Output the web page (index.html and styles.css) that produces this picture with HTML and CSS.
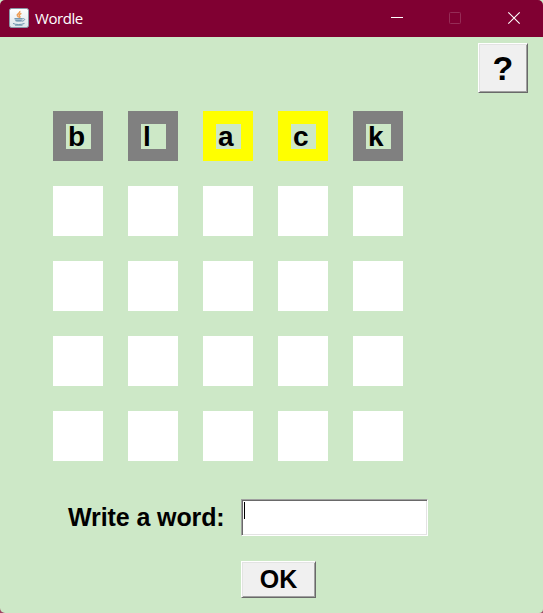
FILE: index.html
```
<!DOCTYPE html>
<html lang="en">
<head>
<meta charset="utf-8">
<title>Wordle</title>
<link rel="stylesheet" href="styles.css">
</head>
<body>
<div class="window">
  <header class="titlebar">
    <svg class="app-icon" width="20" height="20" viewBox="0 0 20 20">
      <defs><linearGradient id="face" x2="0" y2="1"><stop stop-color="#fff"/><stop offset="1" stop-color="#dce5ea"/></linearGradient></defs>
      <rect x=".5" y=".5" width="19" height="19" rx="2" fill="url(#face)" stroke="#8799a8"/>
      <path d="M10.800 3c1 2.400-3.700 2.800-2.500 4.600l1.400 1.800M12.400 5.400c-3 1.300-2.400 2-1.600 3 .4.600 0 1.100-.6 1.500" fill="none" stroke="#ed9a50" stroke-width="1.400"/>
      <path d="M5.500 10.600h8c.2 2-.6 3-2 3.400H8c-1.500-.4-2.400-1.400-2.500-3.400z" fill="#a9c1d0"/>
      <path d="M5.500 10.600h8M6.500 12.700h6M13.500 10.800c3-.8 3 2-.8 2.500M4 15.400c2.500 1.500 8.500 1.500 11.500 0M6 17.200h7.500" fill="none" stroke="#648ba7" stroke-width=".9"/>
    </svg>
    <span class="title">Wordle</span>
    <div class="controls">
      <svg width="58" height="37" viewBox="0 0 58 37"><path d="M20 17.500h12" stroke="#fff"/></svg>
      <svg width="58" height="37" viewBox="0 0 58 37"><rect x="20.500" y="12.500" width="11" height="11" rx=".8" fill="none" stroke="#962c56"/></svg>
      <svg width="56" height="37" viewBox="0 0 56 37"><path d="M21.300 12.300l11.400 11.400M32.700 12.300L21.300 23.700" stroke="#fff" stroke-width="1.150"/></svg>
    </div>
  </header>
  <main class="content">
    <button class="button help">?</button>
    <div class="board">
      <div class="tile absent"><span>b</span></div>
      <div class="tile absent"><span>l</span></div>
      <div class="tile present"><span>a</span></div>
      <div class="tile present"><span>c</span></div>
      <div class="tile absent"><span>k</span></div>
      <div class="tile"></div><div class="tile"></div><div class="tile"></div><div class="tile"></div><div class="tile"></div>
      <div class="tile"></div><div class="tile"></div><div class="tile"></div><div class="tile"></div><div class="tile"></div>
      <div class="tile"></div><div class="tile"></div><div class="tile"></div><div class="tile"></div><div class="tile"></div>
      <div class="tile"></div><div class="tile"></div><div class="tile"></div><div class="tile"></div><div class="tile"></div>
    </div>
    <div class="entry">
      <span class="label">Write a word:</span>
      <div class="field"><i class="caret"></i></div>
      <button class="button ok">OK</button>
    </div>
  </main>
</div>
</body>
</html>
```
FILE: styles.css
```
* { box-sizing: border-box; }
html { overflow: hidden; }
body {
  margin: 0;
  background: #cde8c7;
  font-family: "Liberation Sans", Arial, sans-serif;
  color: #000;
}
.window {
  width: 543px;
  height: 613px;
  background: #cde8c7;
  border-radius: 0 0 4px 5px;
  box-shadow: 0 6px 0 0 #9c4563;
  overflow: hidden;
}
.titlebar {
  display: flex;
  align-items: center;
  height: 37px;
  padding-left: 9px;
  background: #800032;
  border-radius: 5px 5px 0 0;
}
.app-icon { display: block; margin-top: -2px; }
.title {
  margin: -2px 0 0 6px;
  font: 15px/20px "Open Sans", "Noto Sans", sans-serif;
  letter-spacing: -0.45px;
  color: #fff;
}
.controls { display: flex; margin-left: auto; }
.controls svg { display: block; }
.content { display: flex; flex-direction: column; padding-top: 6px; }
.button {
  padding: 0;
  border: 1px solid;
  border-color: #fff #696969 #696969 #fff;
  background: #f0f0f0;
  box-shadow: inset 1px 1px #e3e3e3, inset -1px -1px #a0a0a0;
  font-family: inherit;
  font-weight: bold;
  color: #000;
}
.help {
  align-self: flex-end;
  width: 50px;
  height: 50px;
  margin-right: 15px;
  font-size: 34px;
  line-height: 48px;
}
.board {
  display: grid;
  grid-template-columns: repeat(5, 50px);
  grid-auto-rows: 50px;
  gap: 25px;
  margin: 18px 0 0 53px;
}
.tile { background: #fff; padding: 13px 12px 12px 13px; }
.tile span {
  display: block;
  width: 25px;
  height: 25px;
  padding-left: 2px;
  background: #cde8c7;
  font-size: 28px;
  font-weight: bold;
  line-height: 25px;
}
.absent { background: #808080; }
.present { background: #ff0; }
.entry {
  display: grid;
  grid-template-columns: 173px 187px;
  grid-template-rows: 37px 37px;
  row-gap: 25px;
  margin: 38px 0 0 68px;
}
.label {
  font-size: 25px;
  font-weight: bold;
  line-height: 36px;
  letter-spacing: -0.1px;
  white-space: nowrap;
}
.field {
  padding: 2px;
  border: 1px solid;
  border-color: #a0a0a0 #fff #fff #a0a0a0;
  background: #fff;
  box-shadow: inset 1px 1px #696969, inset -1px -1px #e3e3e3;
}
.caret { display: block; width: 1px; height: 17px; background: #000; }
.ok { grid-column: 2; width: 75px; height: 37px; font-size: 25px; line-height: 35px; }
```
